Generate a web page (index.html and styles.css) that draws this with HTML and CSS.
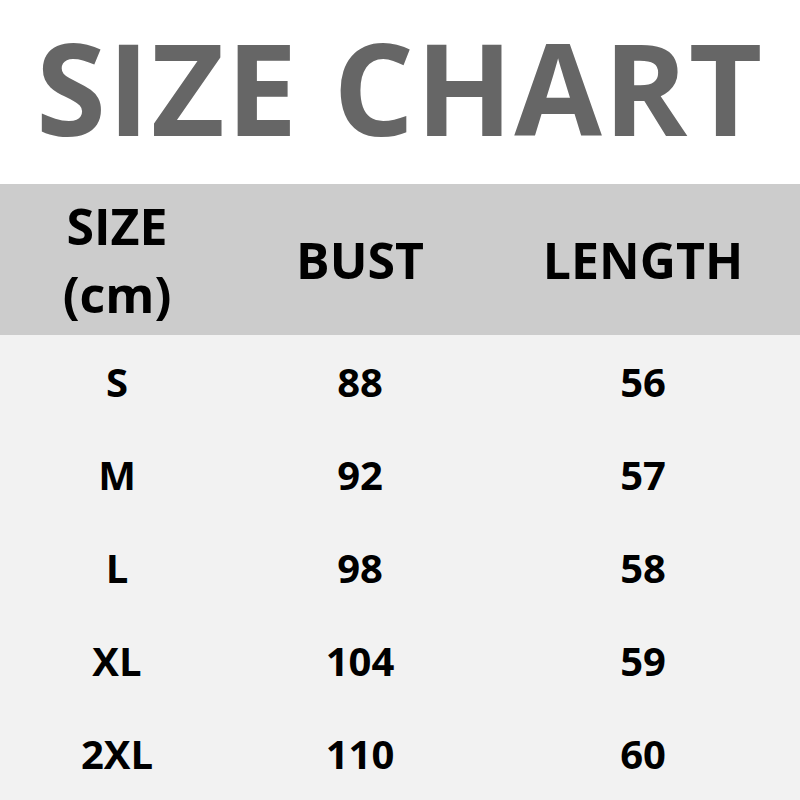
FILE: index.html
```html
<!DOCTYPE html>
<html lang="en">
<head>
<meta charset="utf-8">
<title>Size Chart</title>
<link rel="stylesheet" href="styles.css">
</head>
<body>
<div class="page">
  <h1 class="title">SIZE CHART</h1>
  <div class="table">
    <div class="head">
      <div class="cell">SIZE<br>(cm)</div>
      <div class="cell">BUST</div>
      <div class="cell">LENGTH</div>
    </div>
    <div class="body">
      <div class="row"><div class="cell">S</div><div class="cell">88</div><div class="cell">56</div></div>
      <div class="row"><div class="cell">M</div><div class="cell">92</div><div class="cell">57</div></div>
      <div class="row"><div class="cell">L</div><div class="cell">98</div><div class="cell">58</div></div>
      <div class="row"><div class="cell">XL</div><div class="cell">104</div><div class="cell">59</div></div>
      <div class="row"><div class="cell">2XL</div><div class="cell">110</div><div class="cell">60</div></div>
    </div>
  </div>
</div>
</body>
</html>
```
FILE: styles.css
```css
html, body {
  margin: 0;
  padding: 0;
  background: #ffffff;
}
.page {
  width: 800px;
  height: 800px;
  display: flex;
  flex-direction: column;
  font-family: "Open Sans", "Noto Sans", sans-serif;
  font-weight: 700;
  overflow: hidden;
}
.title {
  margin: 0;
  height: 184px;
  box-sizing: border-box;
  padding-bottom: 12px;
  display: flex;
  align-items: center;
  justify-content: center;
  font-size: 127px;
  font-weight: 700;
  color: #666666;
  line-height: 1;
  letter-spacing: 1.5px;
}
.table {
  flex: 1;
  display: flex;
  flex-direction: column;
}
.head, .row {
  display: grid;
  grid-template-columns: 234px 252px 314px;
}
.head {
  height: 151px;
  background: #cccccc;
  font-size: 50px;
  line-height: 68px;
  color: #000;
}
.body {
  flex: 1;
  background: #f2f2f2;
}
.row {
  height: 93px;
  font-size: 40px;
  color: #000;
}
.cell {
  display: flex;
  align-items: center;
  justify-content: center;
  text-align: center;
}
```
